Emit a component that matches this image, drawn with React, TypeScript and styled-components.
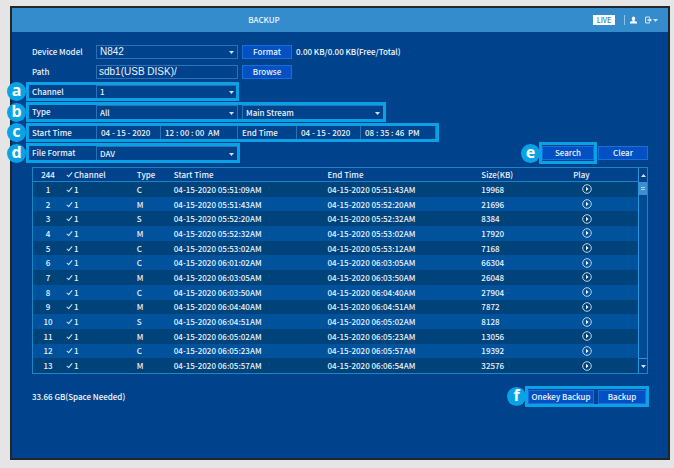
import React from "react";
import styled, { createGlobalStyle } from "styled-components";

const Global = createGlobalStyle`
  *, *::before, *::after { box-sizing: border-box; }
  body { margin: 0; background: #e5e5e6; }
  body, button, input, select {
    font-family: "Noto Sans CJK SC", "Noto Sans", sans-serif;
    font-size: 8px;
    font-weight: 500;
    line-height: 14px;
    color: #eaf4fd;
  }
`;

const Page = styled.div`
  min-height: 100vh;
  padding: 6px 4px 8px 10px;
  display: flex;
`;

const Screen = styled.main`
  flex: 1;
  min-width: 0;
  border: 2px solid #20262c;
  background: #00438c;
  display: flex;
  flex-direction: column;
`;

const Header = styled.header`
  display: grid;
  grid-template-columns: 36% 1fr auto;
  align-items: center;
  height: 24px;
  background: #358ccd;
`;

const Title = styled.h1`
  grid-column: 2;
  margin: 0;
  font-size: 8px;
  font-weight: 500;
  line-height: 14px;
`;

const Tools = styled.div`
  display: flex;
  align-items: center;
  padding-right: 10px;
`;

const LiveButton = styled.button`
  width: 22px;
  height: 10px;
  padding: 0;
  border: 0;
  background: #fff;
  color: #3a7fc4;
  font-size: 7px;
  line-height: 10px;
`;

const Divider = styled.span`
  width: 1px;
  height: 10px;
  margin: 0 5px 0 9px;
  background: #8fc4ea;
`;

const IconButton = styled.button`
  display: flex;
  align-items: center;
  gap: 1px;
  padding: 0;
  border: 0;
  background: none;
  margin-right: 8px;
  &:last-child { margin-right: 0; }
`;

const Content = styled.div`
  display: flex;
  flex-direction: column;
  padding: 13px 20px 20px;
`;

const Form = styled.form`
  display: flex;
  flex-direction: column;
  gap: 6px;
`;

const FormRow = styled.div<{ $height?: number }>`
  display: flex;
  justify-content: space-between;
  height: ${(p) => p.$height ?? 14}px;
`;

const Group = styled.div`
  position: relative;
  display: flex;
  align-items: stretch;
  gap: 4px;
`;

const Highlight = styled.span<{ $wide?: boolean; $right?: number }>`
  position: absolute;
  top: ${(p) => (p.$wide ? -4 : -3)}px;
  bottom: ${(p) => (p.$wide ? -3 : -2)}px;
  left: ${(p) => (p.$wide ? -3 : -6)}px;
  right: ${(p) => -(p.$right ?? 3)}px;
  border: 3px solid #0aa2e6;
  pointer-events: none;
`;

const Badge = styled.span<{ $near?: boolean }>`
  position: absolute;
  top: 50%;
  left: ${(p) => (p.$near ? -21 : -25)}px;
  width: 19px;
  height: 19px;
  margin-top: -10px;
  border-radius: 50%;
  background: #0aa2e6;
  color: #fff;
  font-family: "Noto Sans", sans-serif;
  font-size: 16px;
  font-weight: 700;
  line-height: 17px;
  text-align: center;
`;

const Label = styled.label`
  width: 60px;
  white-space: nowrap;
`;

const EndLabel = styled(Label)`
  width: 50px;
`;

const SelectBox = styled.span`
  position: relative;
  display: flex;
  width: 142px;
  svg {
    position: absolute;
    right: 4px;
    top: 50%;
    margin-top: -1px;
    pointer-events: none;
  }
`;

const Select = styled.select<{ $plain?: boolean }>`
  appearance: none;
  width: 100%;
  padding: 0 3px;
  border: 1px solid #2b72b4;
  border-radius: 0;
  background: #00438c;
  font-family: ${(p) => (p.$plain ? '"Liberation Sans", Arial, sans-serif' : "inherit")};
  font-size: ${(p) => (p.$plain ? 10 : 8)}px;
  font-weight: ${(p) => (p.$plain ? 400 : 500)};
  line-height: 12px;
`;

const PathInput = styled.input`
  width: 142px;
  padding: 0 2px;
  border: 1px solid #2b72b4;
  background: #00438c;
  font-family: "Liberation Sans", Arial, sans-serif;
  font-size: 10px;
  font-weight: 400;
  line-height: 12px;
`;

const TimeFields = styled.span`
  display: flex;
  border-right: 1px solid #2b72b4;
`;

const TimeInput = styled.input<{ $width: number }>`
  width: ${(p) => p.$width}px;
  padding: 0 0 0 4px;
  border: 0;
  border-left: 1px solid #2b72b4;
  background: none;
`;

const Button = styled.button<{ $width?: number }>`
  width: ${(p) => p.$width ?? 50}px;
  height: 14px;
  padding: 0;
  border: 1px solid #1670d8;
  background: #0350c4;
  line-height: 12px;
  white-space: nowrap;
`;

const Actions = styled.div`
  display: flex;
  gap: 4px;
  align-items: stretch;
`;

const Note = styled.span`
  color: #f6fafe;
`;

const ListFrame = styled.section`
  display: flex;
  margin-top: 6px;
  border: 1px solid #1c86c4;
`;

const Table = styled.table`
  flex: 1;
  min-width: 0;
  height: 205px;
  table-layout: fixed;
  border-collapse: collapse;
  th, td {
    height: 14px;
    padding: 0;
    text-align: left;
    font-weight: 500;
    line-height: 13px;
    white-space: nowrap;
  }
  th {
    padding-bottom: 1px;
    box-shadow: inset 0 -1px #1c86c4;
  }
  th:first-child, td:first-child { text-align: center; }
  tbody tr:nth-child(odd) { background: #00437a; }
  tbody tr:nth-child(even) { background: #00529c; }
`;

const Col = styled.col<{ $width: number }>`
  width: ${(p) => p.$width}px;
`;

const CheckLabel = styled.label`
  display: flex;
  align-items: center;
  gap: 1px;
  padding-left: 3px;
`;

const Check = styled.input`
  appearance: none;
  width: 7px;
  height: 7px;
  margin: 0;
  background: transparent;
  &:checked::before {
    content: "";
    display: block;
    width: 3px;
    height: 6px;
    margin-left: 2px;
    border: solid #cfe4f7;
    border-width: 0 1px 1px 0;
    transform: rotate(40deg);
  }
`;

const PlayButton = styled.button`
  display: flex;
  margin-left: 9px;
  padding: 0;
  border: 0;
  background: none;
`;

const Scrollbar = styled.div`
  display: flex;
  flex-direction: column;
  width: 9px;
  border-left: 1px solid #2a93dd;
  background: #004a94;
`;

const ScrollArrow = styled.button`
  display: flex;
  align-items: center;
  justify-content: center;
  height: 14px;
  padding: 0;
  border: 0;
  background: #00438c;
`;

const Thumb = styled.div`
  display: flex;
  flex-direction: column;
  align-items: center;
  justify-content: center;
  gap: 1px;
  height: 13px;
  background: #3c8fd0;
  &::before, &::after {
    content: "";
    width: 4px;
    height: 1px;
    background: #a8d3f2;
  }
`;

const Track = styled.div`
  flex: 1;
  border-bottom: 1px solid #2a93dd;
`;

const Footer = styled.footer`
  display: flex;
  justify-content: space-between;
  margin-top: 16px;
  padding-right: 2px;
`;

const Caret = ({ up = false }: { up?: boolean }) => (
  <svg width="5" height="3" viewBox="0 0 5 3" aria-hidden="true">
    <path d={up ? "M0 3h5L2.5 0z" : "M0 0h5L2.5 3z"} fill="#cfe4f7" />
  </svg>
);

const UserIcon = () => (
  <svg width="7" height="8" viewBox="0 0 7 8" aria-hidden="true">
    <path d="M3.5 0.5a1.8 2 0 0 1 1 3.6v.8l2.2.9q.3.2.3.7v1H0v-1q0-.5.3-.7l2.2-.9v-.8a1.8 2 0 0 1 1-3.6z" fill="#fff" />
  </svg>
);

const ExitIcon = () => (
  <svg width="7" height="8" viewBox="0 0 7 8" aria-hidden="true">
    <path d="M4.5 1.8V1H.6v6h3.9v-.8" fill="none" stroke="#d8ebfa" strokeWidth="1" />
    <path d="M2.5 3.2h2V1.8L7 4 4.5 6.2V4.8h-2z" fill="#e8f4fd" />
  </svg>
);

const PlayIcon = () => (
  <svg width="10" height="10" viewBox="0 0 10 10" aria-hidden="true">
    <circle cx="5" cy="5" r="4.3" fill="none" stroke="#cfe4f7" strokeWidth="0.9" />
    <path d="M4 2.8 6.5 5 4 7.2z" fill="#fff" />
  </svg>
);

const types = ["C", "M", "S", "M", "C", "C", "M", "C", "M", "S", "M", "C", "M"];
const times = [
  "05:51:09", "05:51:43", "05:52:20", "05:52:32", "05:53:02", "06:01:02", "06:03:05",
  "06:03:50", "06:04:40", "06:04:51", "06:05:02", "06:05:23", "06:05:57",
];
const ends = [
  "05:51:43", "05:52:20", "05:52:32", "05:53:02", "05:53:12", "06:03:05", "06:03:50",
  "06:04:40", "06:04:51", "06:05:02", "06:05:23", "06:05:57", "06:06:54",
];
const sizes = [19968, 21696, 8384, 17920, 7168, 66304, 26048, 27904, 7872, 8128, 13056, 19392, 32576];
const columns = [30, 74, 37, 154, 154, 92, 65];

interface DropDownProps {
  id: string;
  value: string;
  plain?: boolean;
  label?: string;
}

const DropDown = ({ id, value, plain, label }: DropDownProps) => (
  <SelectBox>
    <Select id={id} $plain={plain} aria-label={label}>
      <option>{value}</option>
    </Select>
    <Caret />
  </SelectBox>
);

export default function App() {
  return (
    <Page>
      <Global />
      <Screen>
        <Header>
          <Title>BACKUP</Title>
          <Tools>
            <LiveButton>LIVE</LiveButton>
            <Divider />
            <IconButton aria-label="User"><UserIcon /></IconButton>
            <IconButton aria-label="Log out">
              <ExitIcon />
              <Caret />
            </IconButton>
          </Tools>
        </Header>
        <Content>
          <Form onSubmit={(e) => e.preventDefault()}>
            <FormRow>
              <Group>
                <Label htmlFor="device">Device Model</Label>
                <DropDown id="device" value="N842" plain />
                <Button type="button">Format</Button>
                <Note>0.00 KB/0.00 KB(Free/Total)</Note>
              </Group>
            </FormRow>
            <FormRow>
              <Group>
                <Label htmlFor="path">Path</Label>
                <PathInput id="path" defaultValue="sdb1(USB DISK)/" />
                <Button type="button">Browse</Button>
              </Group>
            </FormRow>
            <FormRow>
              <Group>
                <Label htmlFor="channel">Channel</Label>
                <DropDown id="channel" value="1" />
                <Highlight $right={1} />
                <Badge>a</Badge>
              </Group>
            </FormRow>
            <FormRow $height={15}>
              <Group>
                <Label htmlFor="type">Type</Label>
                <DropDown id="type" value="All" />
                <DropDown id="stream" value="Main Stream" label="Stream" />
                <Highlight $right={2} />
                <Badge>b</Badge>
              </Group>
            </FormRow>
            <FormRow>
              <Group>
                <Label htmlFor="start">Start Time</Label>
                <TimeFields>
                  <TimeInput id="start" $width={64} defaultValue="04 - 15 - 2020" />
                  <TimeInput $width={77} aria-label="Start clock" defaultValue="12 : 00 : 00  AM" />
                </TimeFields>
                <EndLabel htmlFor="end">End Time</EndLabel>
                <TimeFields>
                  <TimeInput id="end" $width={64} defaultValue="04 - 15 - 2020" />
                  <TimeInput $width={75} aria-label="End clock" defaultValue="08 : 35 : 46  PM" />
                </TimeFields>
                <Highlight $right={3} />
                <Badge>c</Badge>
              </Group>
            </FormRow>
            <FormRow $height={15}>
              <Group>
                <Label htmlFor="format">File Format</Label>
                <DropDown id="format" value="DAV" />
                <Highlight $right={2} />
                <Badge>d</Badge>
              </Group>
              <Actions>
                <Group>
                  <Button type="submit" $width={52}>Search</Button>
                  <Highlight $wide />
                  <Badge $near>e</Badge>
                </Group>
                <Button type="reset">Clear</Button>
              </Actions>
            </FormRow>
          </Form>

          <ListFrame>
            <Table>
              <colgroup>
                {columns.map((width, i) => <Col key={i} $width={width} />)}
              </colgroup>
              <thead>
                <tr>
                  <th>244</th>
                  <th><CheckLabel><Check type="checkbox" defaultChecked />Channel</CheckLabel></th>
                  <th>Type</th>
                  <th>Start Time</th>
                  <th>End Time</th>
                  <th>Size(KB)</th>
                  <th>Play</th>
                </tr>
              </thead>
              <tbody>
                {times.map((time, i) => (
                  <tr key={time}>
                    <td>{i + 1}</td>
                    <td><CheckLabel><Check type="checkbox" defaultChecked />1</CheckLabel></td>
                    <td>{types[i]}</td>
                    <td>04-15-2020 {time}AM</td>
                    <td>04-15-2020 {ends[i]}AM</td>
                    <td>{sizes[i]}</td>
                    <td><PlayButton aria-label={`Play ${i + 1}`}><PlayIcon /></PlayButton></td>
                  </tr>
                ))}
              </tbody>
            </Table>
            <Scrollbar>
              <ScrollArrow aria-label="Scroll up"><Caret up /></ScrollArrow>
              <Thumb />
              <Track />
              <ScrollArrow aria-label="Scroll down"><Caret /></ScrollArrow>
            </Scrollbar>
          </ListFrame>

          <Footer>
            <Note>33.66 GB(Space Needed)</Note>
            <Group>
              <Button type="button" $width={66}>Onekey Backup</Button>
              <Button type="button" $width={48}>Backup</Button>
              <Highlight $wide />
              <Badge $near>f</Badge>
            </Group>
          </Footer>
        </Content>
      </Screen>
    </Page>
  );
}
